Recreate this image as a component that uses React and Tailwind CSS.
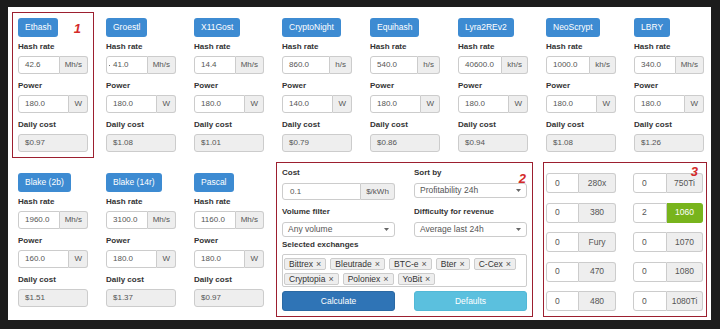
const topAlgos = [
  { name: 'Ethash', hash: '42.6', unit: 'Mh/s', power: '180.0', cost: '$0.97' },
  { name: 'Groestl', hash: '41.0', unit: 'Mh/s', power: '180.0', cost: '$1.08', caret: true },
  { name: 'X11Gost', hash: '14.4', unit: 'Mh/s', power: '180.0', cost: '$1.01' },
  { name: 'CryptoNight', hash: '860.0', unit: 'h/s', power: '140.0', cost: '$0.79' },
  { name: 'Equihash', hash: '540.0', unit: 'h/s', power: '180.0', cost: '$0.86' },
  { name: 'Lyra2REv2', hash: '40600.0', unit: 'kh/s', power: '180.0', cost: '$0.94' },
  { name: 'NeoScrypt', hash: '1000.0', unit: 'kh/s', power: '180.0', cost: '$1.08' },
  { name: 'LBRY', hash: '340.0', unit: 'Mh/s', power: '180.0', cost: '$1.26' },
]

const bottomAlgos = [
  { name: 'Blake (2b)', hash: '1960.0', unit: 'Mh/s', power: '160.0', cost: '$1.51' },
  { name: 'Blake (14r)', hash: '3100.0', unit: 'Mh/s', power: '180.0', cost: '$1.37' },
  { name: 'Pascal', hash: '1160.0', unit: 'Mh/s', power: '180.0', cost: '$0.97' },
]

const amdCards = ['280x', '380', 'Fury', '470', '480']
const nvCards = [
  { name: '750Ti', n: '0' },
  { name: '1060', n: '2', on: true },
  { name: '1070', n: '0' },
  { name: '1080', n: '0' },
  { name: '1080Ti', n: '0' },
]

const exchanges = ['Bittrex', 'Bleutrade', 'BTC-e', 'Bter', 'C-Cex', 'Cryptopia', 'Poloniex', 'YoBit']

function Label({ children, className = '' }) {
  return <div className={`text-[8px] leading-[10px] font-bold text-[#333] ${className}`}>{children}</div>
}

function InputGroup({ value, unit, caret = false }) {
  return (
    <div className="flex h-[18px] text-[8px] text-[#555]">
      <div className="flex-1 min-w-0 flex items-center pl-[6px] border border-[#ccc] rounded-l-[3px] bg-white">
        {caret && <span className="w-[1px] h-[1px] bg-[#777] -ml-[4px] mr-[3px]" />}
        {value}
      </div>
      <div className="flex items-center px-[5px] border border-l-0 border-[#ccc] rounded-r-[3px] bg-[#eee]">{unit}</div>
    </div>
  )
}

function Algo({ algo }) {
  return (
    <div className="w-[70px]">
      <div className="flex w-fit items-center h-[19px] px-[7px] rounded-[3px] bg-[#3d8bd2] text-white text-[8.5px]">
        {algo.name}
      </div>
      <Label className="mt-[5px] mb-[4px]">Hash rate</Label>
      <InputGroup value={algo.hash} unit={algo.unit} caret={algo.caret} />
      <Label className="mt-[7px] mb-[4px]">Power</Label>
      <InputGroup value={algo.power} unit="W" />
      <Label className="mt-[7px] mb-[4px]">Daily cost</Label>
      <div className="h-[18px] flex items-center pl-[6px] border border-[#ccc] rounded-[3px] bg-[#eee] text-[8px] text-[#555]">
        {algo.cost}
      </div>
    </div>
  )
}

function Mark({ n, className }) {
  return (
    <span className={`absolute text-[#d42a2a] text-[13px] leading-none font-bold italic ${className}`}>
      {n}
    </span>
  )
}

function Select({ value }) {
  return (
    <div className="h-[15px] flex items-center justify-between px-[5px] border border-[#ccc] rounded-[3px] bg-white text-[8.5px] text-[#555]">
      <span>{value}</span>
      <svg width="5" height="3" viewBox="0 0 5 3">
        <path d="M0 0 L5 0 L2.5 3 Z" fill="#666" />
      </svg>
    </div>
  )
}

function CardInput({ n, name, on = false, split }) {
  return (
    <div className="flex h-[20px] text-[8.5px] text-[#555]">
      <div className={`${split} flex items-center pl-[8px] border border-[#ccc] rounded-l-[3px] bg-white`}>{n}</div>
      <div
        className={`flex-1 flex items-center justify-center border border-l-0 rounded-r-[3px] ${
          on ? 'bg-[#78b41c] border-[#78b41c] text-white' : 'bg-[#eee] border-[#ccc]'
        }`}
      >
        {name}
      </div>
    </div>
  )
}

export default function App() {
  return (
    <div className="w-[720px] h-[329px] bg-[#1c1c1c] pt-[7px] pl-[8px] font-['Liberation_Sans',Arial,sans-serif]">
      <div className="w-[703px] h-[313px] bg-white pt-[11px] pl-[10px]">
        <div className="flex gap-[18px]">
          {topAlgos.map((a, i) =>
            i === 0 ? (
              <div key={a.name} className="relative -m-[6px] p-[5px] border border-[#9c1f2f]">
                <Algo algo={a} />
                <Mark n="1" className="right-[12px] top-[9px]" />
              </div>
            ) : (
              <Algo key={a.name} algo={a} />
            )
          )}
        </div>

        <div className="flex mt-[10px]">
          <div className="flex gap-[18px] pt-[11px]">
            {bottomAlgos.map(a => (
              <Algo key={a.name} algo={a} />
            ))}
          </div>

          <div className="relative ml-[12px] w-[257px] h-[155px] border border-[#9c1f2f] px-[5px] pt-[5px]">
            <Mark n="2" className="right-[6px] top-[9px]" />
            <div className="grid grid-cols-2 gap-x-[19px] items-start">
              <div>
                <Label className="text-[8.5px] mb-[5px]">Cost</Label>
                <div className="flex h-[17px] text-[8px] text-[#555]">
                  <div className="flex-1 flex items-center pl-[7px] border border-[#ccc] rounded-l-[3px]">0.1</div>
                  <div className="w-[34px] flex items-center justify-center border border-l-0 border-[#ccc] rounded-r-[3px] bg-[#eee]">
                    $/kWh
                  </div>
                </div>
              </div>
              <div>
                <Label className="text-[8.5px] mb-[5px]">Sort by</Label>
                <Select value="Profitability 24h" />
              </div>
              <div className="mt-[7px]">
                <Label className="text-[8.5px] mb-[5px]">Volume filter</Label>
                <Select value="Any volume" />
              </div>
              <div className="mt-[7px]">
                <Label className="text-[8.5px] mb-[5px]">Difficulty for revenue</Label>
                <Select value="Average last 24h" />
              </div>
            </div>
            <Label className="text-[8.5px] mt-[3px] mb-[4px]">Selected exchanges</Label>
            <div className="h-[33px] border border-[#ccc] rounded-[2px] pl-[1px] pt-[3px] flex flex-wrap content-start gap-x-[4px] gap-y-[3px]">
              {exchanges.map(x => (
                <span
                  key={x}
                  className="h-[12px] flex items-center px-[4px] border border-[#ccc] rounded-[2px] bg-[#eee] text-[8.5px] text-[#333]"
                >
                  {x} <span className="ml-[3px] text-[9px] leading-none text-[#555]">×</span>
                </span>
              ))}
            </div>
            <div className="grid grid-cols-2 gap-x-[19px] mt-[4px]">
              <div className="h-[20px] flex items-center justify-center rounded-[3px] bg-[#2f74b6] border border-[#2b69a3] text-white text-[8.5px]">
                Calculate
              </div>
              <div className="h-[20px] flex items-center justify-center rounded-[3px] bg-[#5bc0de] border border-[#52b8d6] text-white text-[8.5px]">
                Defaults
              </div>
            </div>
          </div>

          <div className="relative ml-[10px] w-[164px] h-[155px] border border-[#9c1f2f] pl-[2px] pr-[3px] pt-[10px]">
            <Mark n="3" className="right-[8px] top-[2px]" />
            <div className="grid grid-cols-2 gap-x-[17px] gap-y-[9.5px]">
              {amdCards.map((c, i) => [
                <CardInput key={c} n="0" name={c} split="w-[33px]" />,
                <CardInput key={nvCards[i].name} n={nvCards[i].n} name={nvCards[i].name} on={nvCards[i].on} split="w-[34px]" />,
              ])}
            </div>
          </div>
        </div>
      </div>
    </div>
  )
}
